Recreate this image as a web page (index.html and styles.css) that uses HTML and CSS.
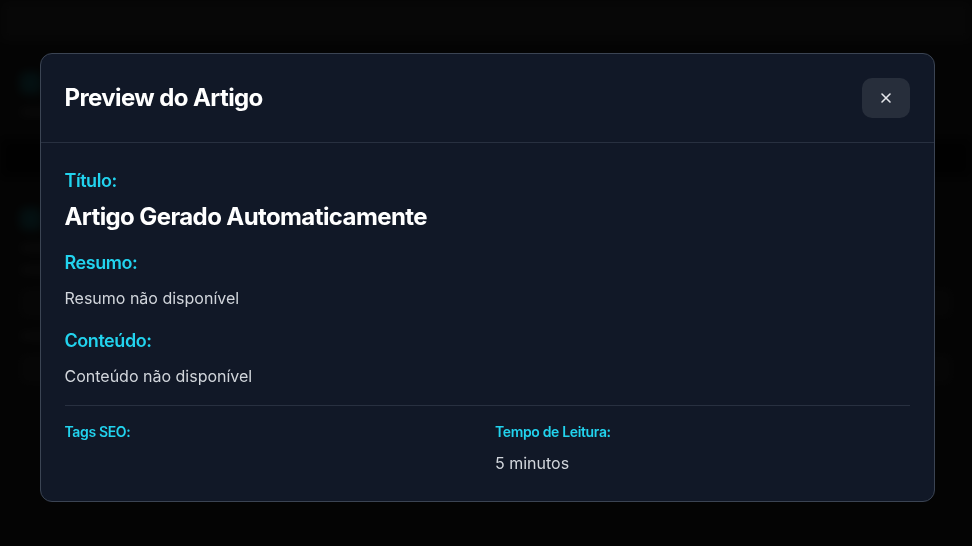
FILE: index.html
```html
<!DOCTYPE html>
<html lang="pt-BR">
<head>
<meta charset="utf-8">
<title>Preview do Artigo</title>
<link rel="stylesheet" href="styles.css">
</head>
<body>
<div class="page">
  <div class="topbar"></div>
  <div class="section">
    <div class="card">
      <div class="card-head"><span class="icon"></span><span class="line w120"></span></div>
      <span class="line w60 dim"></span>
    </div>
  </div>
  <div class="band"></div>
  <div class="section">
    <div class="card">
      <div class="card-head"><span class="icon"></span><span class="line w160"></span></div>
      <span class="line w80 dim"></span>
      <span class="line w100 dim"></span>
      <span class="field"></span>
      <span class="line w60 dim"></span>
      <span class="field"></span>
    </div>
  </div>
</div>

<div class="overlay">
  <div class="modal" role="dialog" aria-labelledby="modal-title">
    <div class="modal-header">
      <h2 id="modal-title" class="modal-title">Preview do Artigo</h2>
      <button class="close-btn" aria-label="Fechar">
        <svg width="12" height="12" viewBox="0 0 12 12" fill="none" stroke="currentColor" stroke-width="1.6" stroke-linecap="round"><path d="M2 2l8 8M10 2l-8 8"/></svg>
      </button>
    </div>
    <div class="modal-body">
      <div class="block title-block">
        <h3 class="label">Título:</h3>
        <p class="article-title">Artigo Gerado Automaticamente</p>
      </div>
      <div class="block">
        <h3 class="label">Resumo:</h3>
        <p class="text">Resumo não disponível</p>
      </div>
      <div class="block">
        <h3 class="label">Conteúdo:</h3>
        <p class="text">Conteúdo não disponível</p>
      </div>
      <div class="meta">
        <div class="meta-col">
          <h4 class="small-label">Tags SEO:</h4>
        </div>
        <div class="meta-col">
          <h4 class="small-label">Tempo de Leitura:</h4>
          <p class="text">5 minutos</p>
        </div>
      </div>
    </div>
  </div>
</div>
</body>
</html>
```

FILE: styles.css
```css
* { box-sizing: border-box; }
html, body { margin: 0; padding: 0; }
body {
  background: #0a0a0a;
  font-family: Inter, "Noto Sans", sans-serif;
  width: 972px;
  height: 546px;
  overflow: hidden;
}

/* dimmed, blurred page behind the modal */
.page {
  filter: blur(5px);
  opacity: 0.55;
  display: flex;
  flex-direction: column;
}
.topbar { height: 42px; background: #161616; }
.band { height: 40px; background: #000; margin-top: 14px; }
.section { padding: 22px 14px 0; }
.card { display: flex; flex-direction: column; gap: 14px; padding: 8px 6px; }
.card-head { display: flex; align-items: center; gap: 10px; }
.icon { width: 22px; height: 22px; border-radius: 6px; background: #0d3b40; }
.line { display: block; height: 8px; border-radius: 4px; background: #2a2a2a; }
.line.dim { background: #202020; }
.w60 { width: 60px; } .w80 { width: 80px; } .w100 { width: 100px; }
.w120 { width: 120px; } .w160 { width: 160px; }
.field { display: block; width: 100%; height: 30px; border-radius: 6px; background: #141414; }

.overlay {
  position: fixed;
  inset: 0;
  background: rgba(0, 0, 0, 0.55);
  display: flex;
  align-items: center;
  justify-content: center;
  padding: 9px 0 0 2px;
}

.modal {
  width: 895px;
  background: #111827;
  border: 1px solid #3b4453;
  border-radius: 12px;
  overflow: hidden;
}

.modal-header {
  display: flex;
  align-items: center;
  justify-content: space-between;
  padding: 24px;
  border-bottom: 1px solid #283040;
}
.modal-title {
  margin: 0;
  color: #ffffff;
  font-size: 24px;
  line-height: 32px;
  font-weight: 700;
  letter-spacing: -0.025em;
}
.close-btn {
  width: 48px;
  height: 40px;
  border: 0;
  border-radius: 10px;
  background: #272e3b;
  color: #e5e7eb;
  display: flex;
  align-items: center;
  justify-content: center;
  padding: 0;
}

.modal-body {
  padding: 24px 24px 25px;
  display: flex;
  flex-direction: column;
  gap: 16px;
}
.block { display: flex; flex-direction: column; gap: 8px; }
.title-block { gap: 6px; }
.label {
  margin: 0;
  color: #22d3ee;
  font-size: 18px;
  line-height: 28px;
  font-weight: 600;
  letter-spacing: -0.025em;
}
.article-title {
  margin: 0;
  color: #ffffff;
  font-size: 24px;
  line-height: 32px;
  font-weight: 700;
  letter-spacing: -0.025em;
}
.text {
  margin: 0;
  color: #d1d5db;
  font-size: 16px;
  line-height: 26px;
}
.meta {
  border-top: 1px solid #283040;
  padding-top: 16px;
  display: grid;
  grid-template-columns: 1fr 1fr;
  gap: 16px;
}
.meta-col { display: flex; flex-direction: column; gap: 8px; }
.small-label {
  margin: 0;
  color: #22d3ee;
  font-size: 14px;
  line-height: 20px;
  font-weight: 600;
  letter-spacing: -0.025em;
}
```
